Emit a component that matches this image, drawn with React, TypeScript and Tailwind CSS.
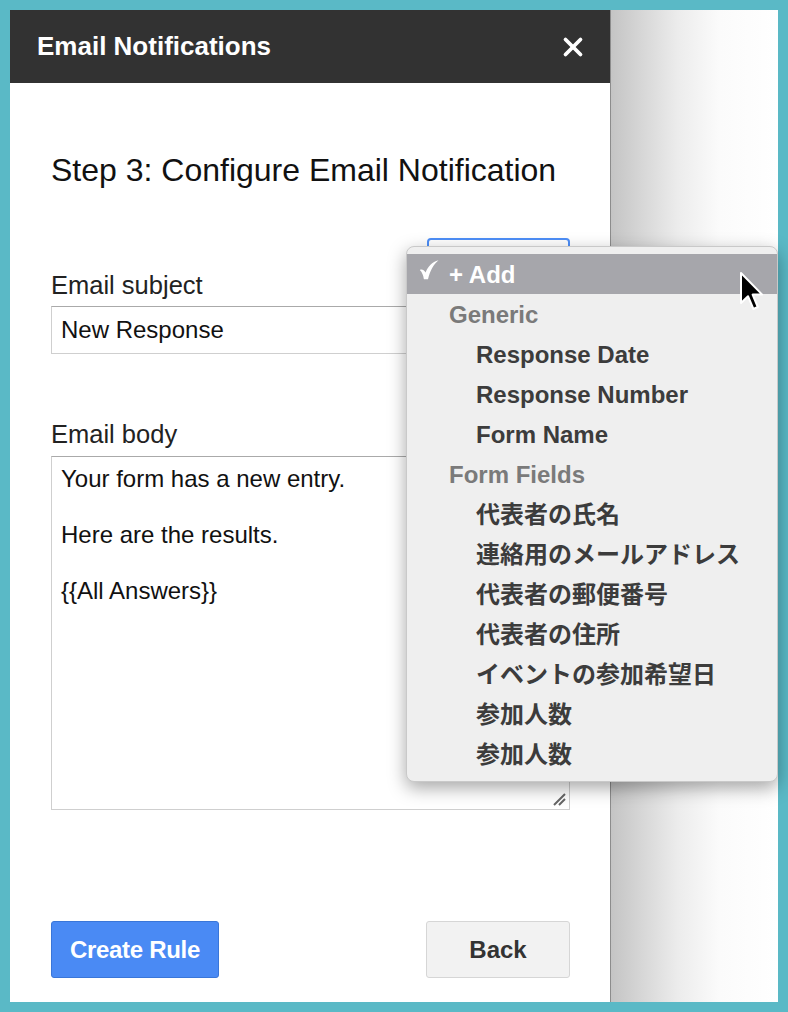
import { X } from "lucide-react";

const font = "font-['Liberation_Sans','Noto_Sans_CJK_JP',Arial,sans-serif]";

type MenuRow = { label: string; kind: "selected" | "group" | "item" };

const menuRows: MenuRow[] = [
  { label: "+ Add", kind: "selected" },
  { label: "Generic", kind: "group" },
  { label: "Response Date", kind: "item" },
  { label: "Response Number", kind: "item" },
  { label: "Form Name", kind: "item" },
  { label: "Form Fields", kind: "group" },
  { label: "代表者の氏名", kind: "item" },
  { label: "連絡用のメールアドレス", kind: "item" },
  { label: "代表者の郵便番号", kind: "item" },
  { label: "代表者の住所", kind: "item" },
  { label: "イベントの参加希望日", kind: "item" },
  { label: "参加人数", kind: "item" },
  { label: "参加人数", kind: "item" },
];

function CheckMark() {
  return (
    <svg width="20" height="20" viewBox="0 0 20 20" className="-mt-[10px]">
      <path
        d="M0.8 10 C3 9 5 10 6.6 12.6 C9 6.5 13 2 19.5 0.3 C14.5 4.5 11.2 10.5 9 19.2 L4.9 19.2 C4.2 15 3.2 12.4 0.8 10 Z"
        fill="#fff"
      />
    </svg>
  );
}

function FieldMenu() {
  return (
    <div className="absolute left-[406px] top-[246px] w-[372px] rounded-[8px] border border-[#c9c9c9] bg-[#efefef] pt-[7px] pb-[7px] shadow-[0_6px_18px_rgba(0,0,0,0.35)]">
      {menuRows.map((row, i) => {
        if (row.kind === "selected") {
          return (
            <div key={i} className="flex h-[40px] items-center bg-[#a6a6ab] pt-[2px] text-white">
              <span className="flex w-[42px] pl-[12px]">
                <CheckMark />
              </span>
              <span className="text-[24px] font-bold">{row.label}</span>
            </div>
          );
        }
        if (row.kind === "group") {
          return (
            <div key={i} className="flex h-[40px] items-center pl-[42px] pt-[2px] text-[24px] font-bold text-[#7a7a7a]">
              {row.label}
            </div>
          );
        }
        return (
          <div key={i} className="flex h-[40px] items-center pl-[69px] pt-[2px] text-[24px] font-bold text-[#3c3c3c]">
            {row.label}
          </div>
        );
      })}
    </div>
  );
}

function Cursor() {
  return (
    <svg className="absolute left-[739px] top-[271px]" width="26" height="42" viewBox="0 0 13 21">
      <path
        d="M1 1 L1 16 L4.5 12.6 L7.2 19 L9.4 18 L6.8 11.8 L11.6 11.8 Z"
        fill="#000"
        stroke="#fff"
        strokeWidth="1"
        strokeLinejoin="round"
      />
    </svg>
  );
}

export default function App() {
  return (
    <div className={`relative h-[1012px] w-[788px] bg-[#5ab9c6] p-[10px] ${font}`}>
      <div className="flex h-full">
        <div className="flex w-[600px] flex-col bg-white">
          <div className="flex h-[73px] items-center justify-between bg-[#323232] pl-[27px] pr-[22px]">
            <h1 className="text-[26px] font-bold text-white">Email Notifications</h1>
            <X className="h-[30px] w-[30px] text-white" strokeWidth={3} />
          </div>

          <div className="flex flex-1 flex-col pl-[41px] pr-[40px]">
            <h2 className="mt-[69px] text-[32px] leading-[36px] text-[#111]">
              Step 3: Configure Email Notification
            </h2>

            <div className="mt-[50px] flex items-end justify-between">
              <label className="text-[25.5px] leading-[30px] text-[#222]">Email subject</label>
              <div className="h-[62px] w-[143px] rounded-[4px] border-2 border-[#4d8ef7]" />
            </div>
            <div className="mt-[6px] flex h-[48px] items-center border border-[#cfcfcf] border-t-[#aaaaaa] pl-[9px] text-[24px] text-[#111]">
              New Response
            </div>

            <label className="mt-[65px] text-[25.5px] leading-[30px] text-[#222]">Email body</label>
            <div className="relative mt-[7px] h-[354px] border border-[#cfcfcf] border-t-[#aaaaaa] px-[9px] pt-[8px] text-[24px] leading-[28px] text-[#111]">
              <p>Your form has a new entry.</p>
              <p className="mt-[28px]">Here are the results.</p>
              <p className="mt-[28px]">{"{{All Answers}}"}</p>
              <svg className="absolute right-[3px] bottom-[3px]" width="14" height="14" viewBox="0 0 14 14">
                <path d="M2 13 L13 2 M7 13 L13 7" stroke="#666" strokeWidth="2" />
              </svg>
            </div>

            <div className="mt-[111px] flex items-center justify-between">
              <button className="h-[57px] w-[168px] rounded-[3px] border border-[#3a76d8] bg-[#4a8af4] text-[24px] font-bold tracking-[-0.3px] text-white">
                Create Rule
              </button>
              <button className="h-[57px] w-[144px] rounded-[3px] border border-[#d6d6d6] bg-[#f2f2f2] text-[24px] font-bold text-[#333]">
                Back
              </button>
            </div>
          </div>
        </div>

        <div className="flex-1 border-l border-[#8c8c8c] bg-[linear-gradient(to_right,#c4c4c4,#ececec_40%,#fbfbfb_65%,#ffffff)]" />
      </div>

      <FieldMenu />
      <Cursor />
    </div>
  );
}
